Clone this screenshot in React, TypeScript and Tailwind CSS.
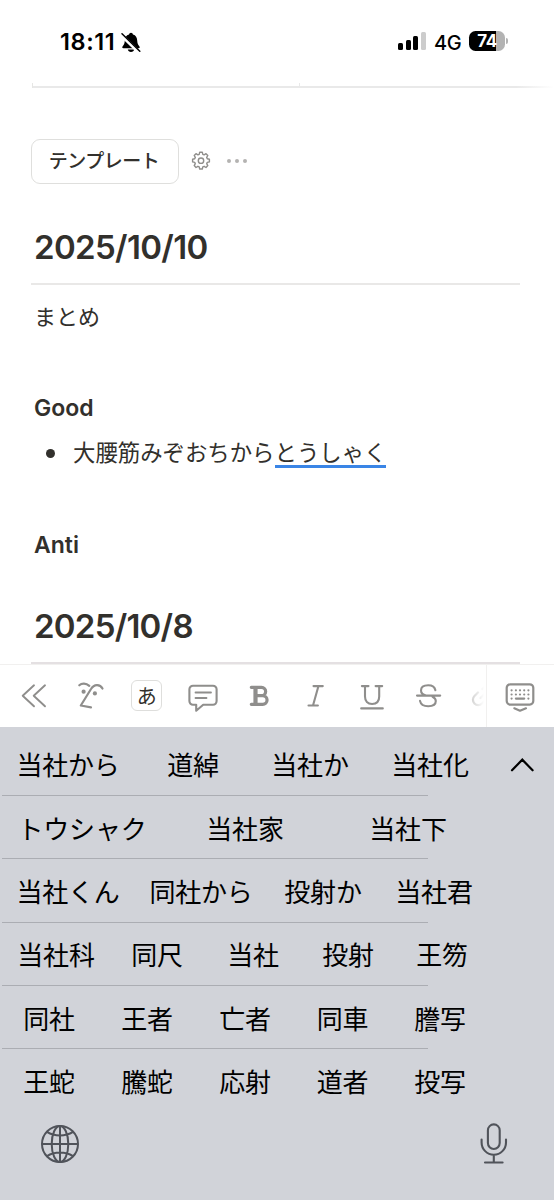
import type { ReactNode } from 'react'

const candidateRows = [
  {
    cells: 'grid-cols-[136px_114px_120px_120px]',
    words: ['当社から', '道綽', '当社か', '当社化'],
  },
  {
    cells: 'grid-cols-[164px_162px_164px]',
    words: ['トウシャク', '当社家', '当社下'],
  },
  {
    cells: 'grid-cols-[136px_130px_114px_108px]',
    words: ['当社くん', '同社から', '投射か', '当社君'],
  },
  {
    cells: 'grid-cols-[112px_90px_102px_88px_100px]',
    words: ['当社科', '同尺', '当社', '投射', '王笏'],
  },
  {
    cells: 'grid-cols-[98px_98px_98px_97px_98px]',
    words: ['同社', '王者', '亡者', '同車', '謄写'],
  },
  {
    cells: 'grid-cols-[98px_98px_98px_97px_98px]',
    words: ['王蛇', '騰蛇', '応射', '道者', '投写'],
  },
]

function Icon({ children, width = 2 }: { children: ReactNode; width?: number }) {
  return (
    <svg
      className="w-8 h-8 shrink-0"
      viewBox="0 0 32 32"
      fill="none"
      stroke="currentColor"
      strokeWidth={width}
      strokeLinecap="round"
      strokeLinejoin="round"
    >
      {children}
    </svg>
  )
}

const tools = [
  <Icon width={1.9}>
    <path d="M16 5.3 4.7 15.7 16 26.3M27 5.3 15.7 15.7 27 26.3" />
  </Icon>,
  <Icon width={2.2}>
    <path d="M5.300 5.300C7.800 2.900 12 2.900 15.300 5.800" />
    <path d="M28.500 8.500C26 3.800 20 3.800 17 9L6.800 25.500 17 27.400" />
    <circle cx="9.6" cy="11.7" r="2.1" fill="currentColor" stroke="none" />
    <circle cx="20.9" cy="13.4" r="2.1" fill="currentColor" stroke="none" />
  </Icon>,
  <div className="w-[31px] h-[31px] mb-px rounded-md border border-[#dededc] bg-white text-[#32302c] text-[20px] leading-none flex items-center justify-center">
    <span className="mt-[3px]">あ</span>
  </div>,
  <Icon width={2.1}>
    <path d="M6 5.700h20a3.6 3.6 0 0 1 3.6 3.6v11.8a3.600 3.600 0 0 1-3.600 3.600H16.2l-7 6v-6H6a3.6 3.6 0 0 1-3.6-3.6V9.300A3.6 3.6 0 0 1 6 5.700Z" />
    <path d="M8.5 12.500H24M8.5 18h11" strokeWidth="1.8" />
  </Icon>,
  <Icon width={3.2}>
    <path d="M8.3 7.300h10.200a4.100 4.100 0 0 1 0 8.300H13M18.800 15.600h.9a4.200 4.200 0 0 1 0 8.700H8.300" />
    <path d="M12.500 8v16" strokeWidth="4.200" />
  </Icon>,
  <Icon width={2.1}>
    <path d="M13.5 6.100h9.3M8.5 25.5h9.4M18.4 6.200 13 25.500" />
  </Icon>,
  <Icon width={2.1}>
    <path d="M5.9 6.100h6.6M19.6 6.100h6.6M9 6.2v10.4c0 4.8 2.7 7.4 7.1 7.4s7.1-2.6 7.1-7.4V6.2M5.2 28.400h21.6" />
  </Icon>,
  <Icon width={2.1}>
    <path d="M23.4 10.3C22.8 7 20.2 5.2 16.2 5.2c-4.5 0-7.2 2.1-7.2 5.2 0 2.6 1.7 4.1 5 5M20.5 16.7c2.2 1 3.3 2.4 3.3 4.4 0 3.200-2.900 5.200-7.600 5.200-4.500 0-7.500-2-8.200-5.400M5 15.600h23.200" />
  </Icon>,
]

function StatusBar() {
  return (
    <header className="h-[83px] pt-[31px] pl-[60px] pr-[46px] flex items-start text-black">
      <span className="h-[22px] w-[56px] flex items-center text-[23.5px] font-semibold tracking-[0.6px]">
        18:11
      </span>
      <svg className="w-5 h-5 ml-[5px] mt-px" viewBox="0 0 20 20" fill="currentColor">
        <path d="M10 .8a2 2 0 0 1 2 1.7c2.800.8 4.100 3 4.200 6 .1 2.700.7 4 2.100 5.700.8 1 .5 2-.8 2H2.500c-1.300 0-1.600-1-.8-2 1.400-1.700 2-3 2.100-5.700.1-3 1.400-5.200 4.200-6A2 2 0 0 1 10 .8ZM6.800 17.500h6.400c-.3 1.600-1.500 2.500-3.200 2.500s-2.900-.9-3.200-2.500Z" />
        <path d="m-.2 2.500 18.500 18" stroke="#fff" strokeWidth="3.600" />
        <path d="m1 1.800 17.800 17.400" stroke="currentColor" strokeWidth="1.500" strokeLinecap="round" />
      </svg>
      <div className="ml-auto flex items-end gap-[2.5px] h-[19px]">
        <span className="w-[5px] h-[7px] rounded-[1.5px] bg-black" />
        <span className="w-[5px] h-[10px] rounded-[1.5px] bg-black" />
        <span className="w-[5px] h-[14px] rounded-[1.5px] bg-black" />
        <span className="w-[5px] h-[18px] rounded-[1.5px] bg-[#cccccc]" />
      </div>
      <span className="h-[23px] w-[27px] ml-[8.5px] flex items-center text-[20px] font-medium tracking-[-0.5px]">
        4G
      </span>
      <div className="ml-2 w-9 h-5 rounded-[6.5px] bg-[linear-gradient(to_right,#000_27px,#b3b3b3_27px)] text-white text-[17px] font-bold tracking-[-0.5px] flex items-center justify-center">
        <span className="mt-px">74</span>
      </div>
      <span className="w-[2px] h-[6px] ml-px mt-[7px] rounded-r-full bg-[#b3b3b3]" />
    </header>
  )
}

function NotePage() {
  return (
    <main className="h-[581px] shrink-0 overflow-hidden text-[#32302c]">
      {/* bottom edge of the table that is scrolled out of view */}
      <div className="ml-8 h-[5px] flex items-stretch border-l border-[#e6e6e4]">
        <div className="w-[267px] border-b-2 border-r border-[#e9e9e9]" />
        <div className="flex-1 flex flex-col justify-end">
          <div className="h-[2px] bg-linear-to-r from-[#e9e9e9] from-85% to-white" />
        </div>
      </div>

      <div className="mt-[50px] ml-[31px] h-[46px] flex items-center">
        <button className="w-[148px] h-[45px] pt-[2px] pr-[2px] rounded-[9px] border-[1.5px] border-[#dfdfdd] text-[19px] font-medium tracking-[-0.5px]">
          テンプレート
        </button>
        <svg
          className="w-5 h-5 ml-3 text-[#8f8e8b]"
          viewBox="0 0 20 20"
          fill="none"
          stroke="currentColor"
          strokeWidth="1.4"
          strokeLinejoin="round"
        >
          <path d="M8.700 1.200h2.600l.5 2.100 1.300.5 1.900-1.100 1.800 1.800-1.100 1.900.6 1.400 2.100.5v2.600l-2.100.5-.6 1.300 1.100 1.900-1.800 1.900-1.900-1.200-1.300.6-.5 2.100H8.700l-.5-2.100-1.300-.6L5 16.500l-1.800-1.900 1.100-1.900-.6-1.300-2.100-.5V8.300l2.100-.5.6-1.400-1.100-1.900L5 2.700l1.900 1.100 1.300-.5Z" />
          <circle cx="10" cy="9.700" r="2.700" />
        </svg>
        <div className="ml-4 flex gap-1">
          <span className="w-1 h-1 rounded-full bg-[#b4b3b1]" />
          <span className="w-1 h-1 rounded-full bg-[#b4b3b1]" />
          <span className="w-1 h-1 rounded-full bg-[#b4b3b1]" />
        </div>
      </div>

      <div className="mx-[31px]">
        <h2 className="mt-[43px] ml-[3px] h-10 leading-10 text-[33px] font-semibold tracking-[-0.65px]">
          2025/10/10
        </h2>
        <hr className="mt-4 w-[489px] border-t-2 border-[#e9e8e7]" />
        <p className="mt-4 ml-[3px] h-8 leading-8 text-[22px]">まとめ</p>
        <h3 className="mt-[59px] ml-[3px] h-8 leading-8 text-[23px] font-semibold">
          Good
        </h3>
        <div className="mt-[13px] ml-[15px] h-8 flex items-center">
          <span className="w-[9px] h-[9px] rounded-full bg-[#32302c]" />
          <p className="ml-[18px] h-8 leading-8 text-[22.4px] whitespace-nowrap flex">
            <span>大腰筋みぞおちから</span>
            <span className="h-[31px] border-b-[3px] border-[#3a85e6]">
              とうしゃく
            </span>
          </p>
        </div>
        <h3 className="mt-[60px] ml-[3px] h-8 leading-8 text-[23px] font-semibold">
          Anti
        </h3>
        <h2 className="mt-[45px] ml-[3px] h-10 leading-10 text-[33px] font-semibold tracking-[-0.75px]">
          2025/10/8
        </h2>
        <hr className="mt-4 w-[489px] border-t-2 border-[#e4e0e2]" />
      </div>
    </main>
  )
}

function Toolbar() {
  return (
    <div className="h-[63px] shrink-0 border-t border-[#f1f0ef] flex text-[#8f8e8c]">
      <div className="w-[486px] pl-[6px] flex items-center overflow-hidden">
        {tools.map((tool, index) => (
          <div key={index} className="w-[56.3px] shrink-0 flex justify-center">
            {tool}
          </div>
        ))}
        <div className="w-8 shrink-0 ml-3 mask-linear-to-r mask-r-from-0% mask-r-to-50% opacity-50">
          <Icon width={2.2}>
            <path d="M10 12.500 6.500 16a5.300 5.300 0 0 0 7.500 7.500l3.500-3.500M12.500 18l5-5M14.500 9l2.500-2.500a5.300 5.300 0 0 1 7.500 7.500L21 17.500" />
          </Icon>
        </div>
      </div>
      <div className="flex-1 border-l border-[#f1f0ef] pr-px pb-px flex items-center justify-center">
        <Icon width={2.2}>
          <rect x="2.700" y="4.300" width="26.600" height="20.300" rx="3.500" />
          <path d="m10.300 28.300 5.700 2.400 6-2.400" />
          <path d="M7.600 10.300h.01M11.900 10.300h.01M16 10.300h.01M20.200 10.300h.01M24.400 10.300h.01M7.600 14.500h.01M11.900 14.500h.01M16 14.500h.01M20.200 14.500h.01M24.400 14.500h.01M7.600 18.600h.01M11.900 18.600h8.300M24.400 18.600h.01" />
        </Icon>
      </div>
    </div>
  )
}

function Keyboard() {
  return (
    <section className="flex-1 bg-[#d1d3d9] text-black flex flex-col">
      <div className="flex pt-[5.5px]">
        <div className="w-[492px] shrink-0">
          {candidateRows.map((row, index) => (
            <div key={index} className="h-[63.4px]">
              <div className={`grid h-[62.4px] pt-[5px] items-center ${row.cells}`}>
                {row.words.map((word) => (
                  <span
                    key={word}
                    className="text-center text-[26px] leading-none whitespace-nowrap tracking-[-0.2px]"
                  >
                    {word}
                  </span>
                ))}
              </div>
              {index < candidateRows.length - 1 && (
                <div className="ml-[2px] w-[426px] h-px bg-[#abadb3]" />
              )}
            </div>
          ))}
        </div>
        <svg
          className="w-6 h-4 ml-[18px] mt-6"
          viewBox="0 0 24 16"
          fill="none"
          stroke="currentColor"
          strokeWidth="2.2"
          strokeLinecap="round"
        >
          <path d="M2 13.300 12.300 2.700 22.600 13.300" />
        </svg>
      </div>
      <div className="mt-[10px] pl-10 pr-[46px] flex items-center justify-between text-[#50535a]">
        <svg className="w-10 h-10" viewBox="0 0 40 40" fill="none" stroke="currentColor" strokeWidth="2">
          <circle cx="20" cy="20" r="18" />
          <ellipse cx="20" cy="20" rx="8.300" ry="18" />
          <path d="M20 2v36M2 20h36M7 7.800c7.500 4.800 18.500 4.800 26 0M7 32.200c7.500-4.800 18.500-4.800 26 0" />
        </svg>
        <svg
          className="w-7 h-[42px]"
          viewBox="0 0 28 42"
          fill="none"
          stroke="currentColor"
          strokeWidth="2.1"
          strokeLinecap="round"
        >
          <rect x="7.900" y="1.400" width="11.800" height="24.600" rx="5.900" />
          <path d="M1.600 16.500v3a12.200 12.200 0 0 0 24.400 0v-3M13.800 32v7.500M5 39.500h17.600" />
        </svg>
      </div>
    </section>
  )
}

export default function App() {
  return (
    <div className="w-[554px] h-[1200px] overflow-hidden bg-white flex flex-col font-['Inter','Noto_Sans_CJK_JP',sans-serif]">
      <StatusBar />
      <NotePage />
      <Toolbar />
      <Keyboard />
    </div>
  )
}
